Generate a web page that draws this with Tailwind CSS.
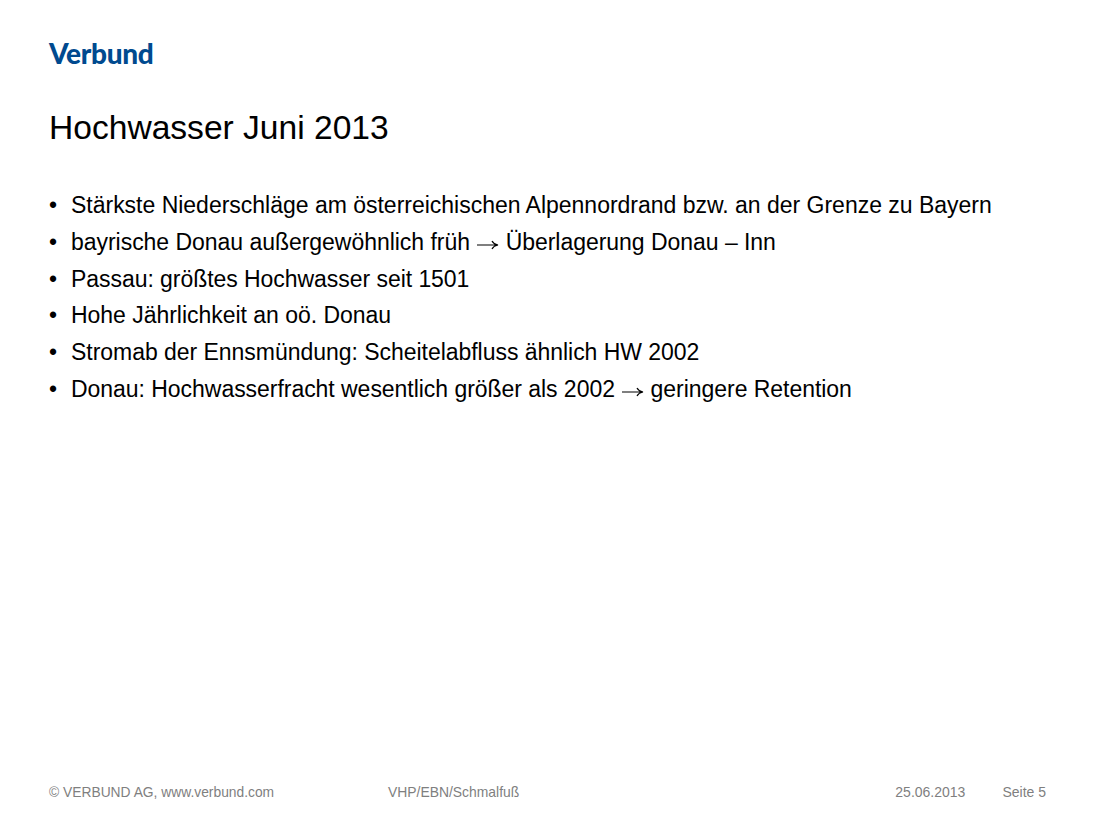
<!DOCTYPE html>
<html lang="de">
  <head>
    <meta charset="UTF-8" />
    <title>Hochwasser Juni 2013</title>
    <script src="https://cdn.jsdelivr.net/npm/@tailwindcss/browser@4"></script>
  </head>
  <body class="bg-white font-['Liberation_Sans',Arial,sans-serif]">
    <div class="w-[1093px] h-[815px] flex flex-col pl-[49px] pr-[47px] overflow-hidden">
      <div class="pt-[36px] h-[108px] text-[#004a8f] text-[28px] font-['Lato',sans-serif] font-black tracking-[-0.3px] leading-[34px]">Verbund</div>
      <h1 class="text-[33.6px] leading-[40px] text-black">Hochwasser Juni 2013</h1>

      <ul class="mt-[39px] text-[23px] leading-[36.8px] text-black">
        <li class="flex"><span class="w-[22px]">•</span><span class="tracking-[-0.012px]">Stärkste Niederschläge am österreichischen Alpennordrand bzw. an der Grenze zu Bayern</span></li>
        <li class="flex"><span class="w-[22px]">•</span><span class="tracking-[-0.035px]">bayrische Donau außergewöhnlich früh <svg class="inline-block w-[23px] h-[12px] align-[-1px]" viewBox="0 0 23 12" fill="none" stroke="black" stroke-width="1.2"><path d="M1 6H21M16 2C17 4 19 5.4 22 6C19 6.6 17 8 16 10"/></svg> Überlagerung Donau – Inn</span></li>
        <li class="flex"><span class="w-[22px]">•</span><span class="tracking-[-0.05px]">Passau: größtes Hochwasser seit 1501</span></li>
        <li class="flex"><span class="w-[22px]">•</span><span class="tracking-[-0.03px]">Hohe Jährlichkeit an oö. Donau</span></li>
        <li class="flex"><span class="w-[22px]">•</span><span class="tracking-[-0.035px]">Stromab der Ennsmündung: Scheitelabfluss ähnlich HW 2002</span></li>
        <li class="flex"><span class="w-[22px]">•</span><span class="tracking-[-0.04px]">Donau: Hochwasserfracht wesentlich größer als 2002 <svg class="inline-block w-[23px] h-[12px] align-[-1px]" viewBox="0 0 23 12" fill="none" stroke="black" stroke-width="1.2"><path d="M1 6H21M16 2C17 4 19 5.4 22 6C19 6.6 17 8 16 10"/></svg> geringere Retention</span></li>
      </ul>

      <div class="mt-auto mb-[14px] flex text-[14px] leading-[18px] text-[#7f7f7f]">
        <span class="w-[339px] text-[13.82px]">© VERBUND AG, www.verbund.com</span>
        <span class="text-[13.9px]">VHP/EBN/Schmalfuß</span>
        <span class="ml-auto">25.06.2013</span>
        <span class="ml-[37px]">Seite 5</span>
      </div>
    </div>
  </body>
</html>
